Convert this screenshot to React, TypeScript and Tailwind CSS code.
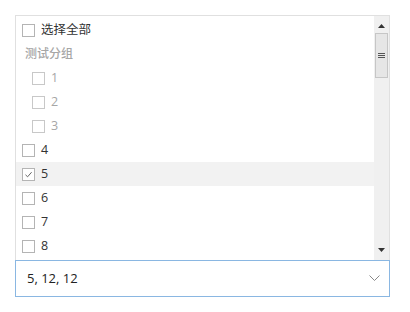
import React from "react";

const Box = ({ checked = false, muted = false }: { checked?: boolean; muted?: boolean }) => (
  <span
    className={`flex h-[13px] w-[13px] shrink-0 items-center justify-center border bg-white ${
      muted ? "border-[#c8c8c8]" : "border-[#b4b4b4]"
    }`}
  >
    {checked && (
      <svg width="9" height="9" viewBox="0 0 9 9" fill="none">
        <path d="M1.5 4.8 L3.6 6.8 L7.6 2.2" stroke="#666" strokeWidth="1" />
      </svg>
    )}
  </span>
);

const Row = ({
  label,
  nested = false,
  muted = false,
  checked = false,
  active = false,
}: {
  label: string;
  nested?: boolean;
  muted?: boolean;
  checked?: boolean;
  active?: boolean;
}) => (
  <div
    className={`flex h-[24px] items-center gap-[6px] ${nested ? "pl-[16px]" : "pl-[6px]"} ${
      active ? "bg-[#f2f2f2]" : ""
    }`}
  >
    <Box checked={checked} muted={muted} />
    <span className={`text-[12.5px] leading-none ${muted ? "text-[#a6a6a6]" : "text-[#333]"}`}>{label}</span>
  </div>
);

export default function App() {
  return (
    <div
      className="h-[312px] w-[410px] bg-white pl-[15px] pt-[15px]"
      style={{ fontFamily: '"Segoe UI", "Open Sans", "Noto Sans CJK SC", sans-serif' }}
    >
      <div className="flex h-[245px] w-[375px] border border-b-0 border-[#e0e0e0]">
        <div className="flex-1 overflow-hidden pt-[2px]">
          <Row label="选择全部" />
          <div className="flex h-[24px] items-center pl-[9px] text-[12px] font-medium text-[#a6a6a6]">测试分组</div>
          <Row label="1" nested muted />
          <Row label="2" nested muted />
          <Row label="3" nested muted />
          <Row label="4" />
          <Row label="5" checked active />
          <Row label="6" />
          <Row label="7" />
          <Row label="8" />
        </div>
        <div className="flex w-[15px] flex-col items-center bg-[#f0f0f0]">
          <div className="flex h-[17px] w-full items-center justify-center pt-[2px]">
            <svg width="7" height="4" viewBox="0 0 7 4">
              <path d="M0 4 L3.5 0 L7 4 Z" fill="#333" />
            </svg>
          </div>
          <div className="flex h-[45px] w-[13px] items-center justify-center border border-[#c6c6c6] bg-[#e6e6e6]">
            <svg width="7" height="7" viewBox="0 0 7 7">
              <path d="M0 1.5 H7 M0 3.5 H7 M0 5.5 H7" stroke="#555" strokeWidth="1" />
            </svg>
          </div>
          <div className="flex-1" />
          <div className="flex h-[17px] w-full items-center justify-center pb-[4px]">
            <svg width="7" height="4" viewBox="0 0 7 4">
              <path d="M0 0 L3.5 4 L7 0 Z" fill="#333" />
            </svg>
          </div>
        </div>
      </div>
      <div className="flex h-[37px] w-[375px] items-center justify-between border border-[#8ab7e2] pl-[11px] pr-[9px]">
        <span className="text-[13px] text-[#222]">5, 12, 12</span>
        <svg width="11" height="7" viewBox="0 0 11 7" fill="none">
          <path d="M0.5 0.5 L5.5 5.5 L10.5 0.5" stroke="#888" strokeWidth="1" />
        </svg>
      </div>
    </div>
  );
}
